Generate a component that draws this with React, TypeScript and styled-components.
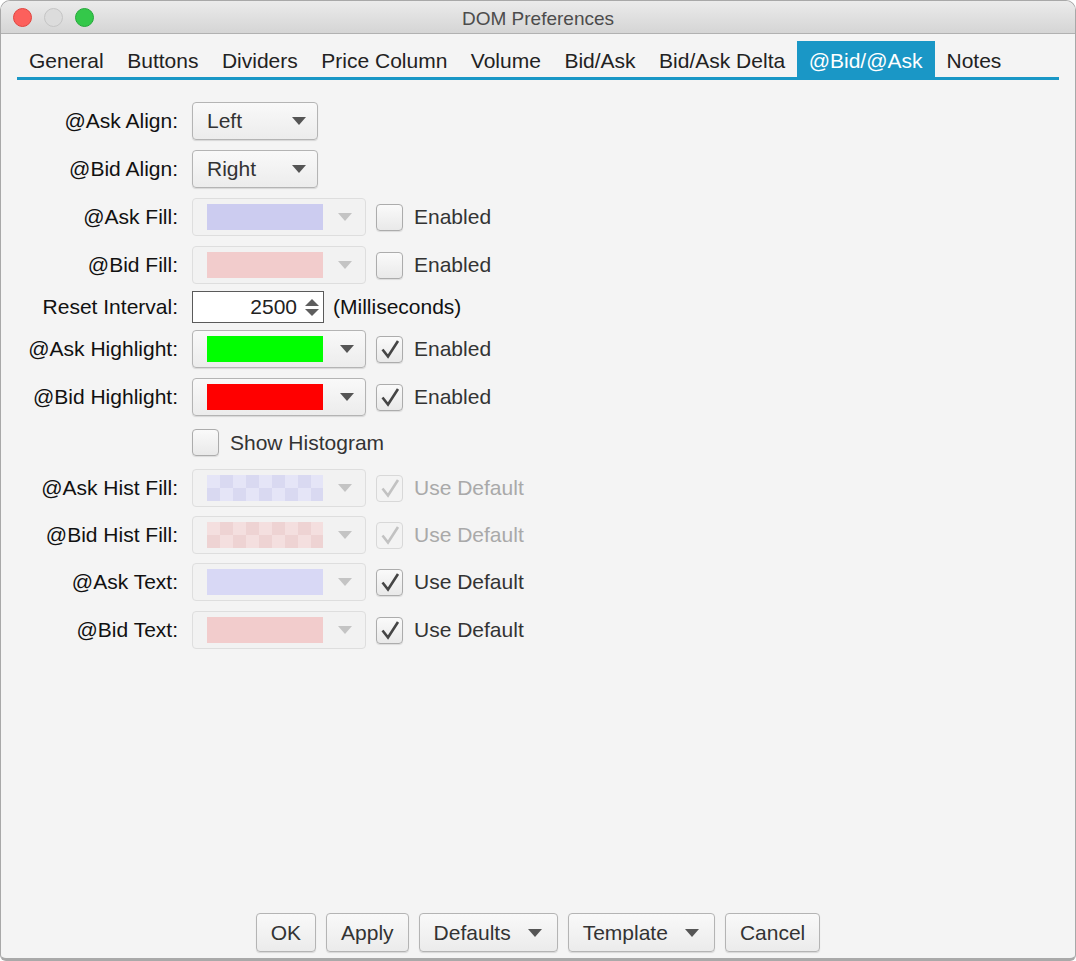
import React from "react";
import styled, { createGlobalStyle, css } from "styled-components";

const GlobalStyle = createGlobalStyle`
  html, body {
    margin: 0;
    padding: 0;
    background: #ffffff;
  }
  body {
    font-family: "Liberation Sans", Arial, sans-serif;
  }
  * {
    box-sizing: border-box;
  }
`;

const Window = styled.div`
  width: 1076px;
  height: 961px;
  display: flex;
  flex-direction: column;
  border: 1px solid #a8a8a8;
  border-bottom: 3px solid #a9a9a9;
  border-radius: 10px 10px 6px 6px;
  overflow: hidden;
  background: #f4f4f4;
`;

const TitleBar = styled.div`
  height: 33px;
  flex: none;
  display: flex;
  align-items: center;
  padding-left: 12px;
  background: linear-gradient(#ebebeb, #d5d5d5);
  border-bottom: 1px solid #b1b1b1;
  position: relative;
`;

const Lights = styled.div`
  display: flex;
  gap: 12px;
`;

const Light = styled.span<{ $fill: string; $edge: string }>`
  width: 19px;
  height: 19px;
  border-radius: 50%;
  background: ${(p) => p.$fill};
  border: 1px solid ${(p) => p.$edge};
`;

const Title = styled.div`
  position: absolute;
  left: 0;
  right: 0;
  top: 0;
  bottom: 0;
  display: flex;
  align-items: center;
  justify-content: center;
  padding-top: 3px;
  font-size: 19px;
  color: #4c4c4c;
  pointer-events: none;
`;

const Body = styled.div`
  flex: 1;
  display: flex;
  flex-direction: column;
  padding: 7px 16px 0 16px;
`;

const TabBar = styled.div`
  display: flex;
  border-bottom: 3px solid #1a97c6;
`;

const Tab = styled.div<{ $active?: boolean }>`
  height: 36px;
  display: flex;
  align-items: center;
  padding: 3px 11.5px 0 12px;
  font-size: 21px;
  color: #222;
  ${(p) =>
    p.$active &&
    css`
      background: #1a97c6;
      color: #ffffff;
      padding: 3px 12px 0 12px;
    `}
`;

const Form = styled.div`
  display: flex;
  flex-direction: column;
  padding-top: 17px;
  flex: 1;
`;

const Row = styled.div<{ $h?: number }>`
  height: ${(p) => p.$h ?? 48}px;
  display: flex;
  align-items: center;
`;

const Label = styled.div`
  width: 161px;
  flex: none;
  text-align: right;
  font-size: 21px;
  color: #111;
  margin-right: 14px;
`;

const Controls = styled.div`
  display: flex;
  align-items: center;
`;

const Combo = styled.div<{ $w: number; $disabled?: boolean }>`
  width: ${(p) => p.$w}px;
  height: 38px;
  display: flex;
  align-items: center;
  justify-content: space-between;
  padding: 0 10px 0 14px;
  border-radius: 4px;
  font-size: 21px;
  color: #333;
  border: 1px solid ${(p) => (p.$disabled ? "#dedede" : "#b4b4b4")};
  background: ${(p) =>
    p.$disabled ? "#f2f2f2" : "linear-gradient(#f9f9f9, #ececec)"};
  box-shadow: ${(p) => (p.$disabled ? "none" : "0 1px 1px rgba(0,0,0,0.12)")};
`;

const Arrow = styled.span<{ $disabled?: boolean }>`
  width: 0;
  height: 0;
  border-left: 7px solid transparent;
  border-right: 7px solid transparent;
  border-top: 8px solid ${(p) => (p.$disabled ? "#c4c4c4" : "#555")};
  margin-right: ${(p) => (p.$disabled ? 3 : 1)}px;
`;

const Swatch = styled.span<{ $color: string; $alt?: string }>`
  width: 116px;
  height: 26px;
  background-color: ${(p) => p.$color};
  ${(p) =>
    p.$alt &&
    css`
      background-image: conic-gradient(
        ${p.$alt} 0 25%,
        transparent 0 50%,
        ${p.$alt} 0 75%,
        transparent 0
      );
      background-size: 26px 26px;
    `}
`;

const Box = styled.span<{ $disabled?: boolean }>`
  width: 27px;
  height: 27px;
  flex: none;
  display: flex;
  align-items: center;
  justify-content: center;
  border-radius: 4px;
  border: 1px solid ${(p) => (p.$disabled ? "#d8d8d8" : "#acacac")};
  background: ${(p) =>
    p.$disabled ? "#f3f3f3" : "linear-gradient(#fafafa, #e9e9e9)"};
  box-shadow: ${(p) => (p.$disabled ? "none" : "0 1px 1px rgba(0,0,0,0.1)")};
`;

const CheckText = styled.span<{ $disabled?: boolean }>`
  font-size: 21px;
  color: ${(p) => (p.$disabled ? "#a9a9a9" : "#333")};
  margin-left: 11px;
`;

const CheckWrap = styled.div<{ $offset?: number }>`
  display: flex;
  align-items: center;
  margin-left: ${(p) => p.$offset ?? 10}px;
`;

const Spinner = styled.div`
  width: 132px;
  height: 32px;
  display: flex;
  align-items: center;
  justify-content: flex-end;
  gap: 8px;
  padding-right: 4px;
  background: #ffffff;
  border: 1px solid #5a5a5a;
  font-size: 21px;
  color: #222;
`;

const Steps = styled.span`
  display: flex;
  flex-direction: column;
  gap: 3px;
`;

const Step = styled.span<{ $up?: boolean }>`
  width: 0;
  height: 0;
  border-left: 7px solid transparent;
  border-right: 7px solid transparent;
  ${(p) =>
    p.$up
      ? "border-bottom: 7px solid #5e5e5e;"
      : "border-top: 7px solid #5e5e5e;"}
`;

const Unit = styled.span`
  font-size: 21px;
  color: #111;
  margin-left: 9px;
`;

const Footer = styled.div`
  display: flex;
  justify-content: center;
  gap: 10px;
  padding-bottom: 6px;
`;

const Button = styled.div`
  height: 39px;
  display: flex;
  align-items: center;
  gap: 17px;
  padding: 0 14px;
  border-radius: 4px;
  border: 1px solid #b4b4b4;
  background: linear-gradient(#f9f9f9, #ebebeb);
  box-shadow: 0 1px 1px rgba(0, 0, 0, 0.12);
  font-size: 21px;
  color: #333;
`;

const Tick = ({ disabled }: { disabled?: boolean }) => (
  <svg width="22" height="22" viewBox="0 0 22 22">
    <path
      d="M3.5 11.5 L9 18.5 L19 3"
      fill="none"
      stroke={disabled ? "#c2c2c2" : "#454545"}
      strokeWidth="2.6"
      strokeLinejoin="miter"
    />
  </svg>
);

const CheckBox = ({
  text,
  checked,
  disabled,
  offset,
}: {
  text: string;
  checked?: boolean;
  disabled?: boolean;
  offset?: number;
}) => (
  <CheckWrap $offset={offset}>
    <Box $disabled={disabled}>{checked && <Tick disabled={disabled} />}</Box>
    <CheckText $disabled={disabled}>{text}</CheckText>
  </CheckWrap>
);

type ColorRowProps = {
  label: string;
  color: string;
  alt?: string;
  disabled?: boolean;
  check: string;
  checked?: boolean;
  checkDisabled?: boolean;
  h?: number;
};

const ColorRow = ({
  label,
  color,
  alt,
  disabled,
  check,
  checked,
  checkDisabled,
  h,
}: ColorRowProps) => (
  <Row $h={h}>
    <Label>{label}</Label>
    <Controls>
      <Combo $w={174} $disabled={disabled}>
        <Swatch $color={color} $alt={alt} />
        <Arrow $disabled={disabled} />
      </Combo>
      <CheckBox text={check} checked={checked} disabled={checkDisabled} />
    </Controls>
  </Row>
);

const tabs = [
  "General",
  "Buttons",
  "Dividers",
  "Price Column",
  "Volume",
  "Bid/Ask",
  "Bid/Ask Delta",
  "@Bid/@Ask",
  "Notes",
];

export default function App() {
  return (
    <>
      <GlobalStyle />
      <Window>
        <TitleBar>
          <Lights>
            <Light $fill="#fc605c" $edge="#e0443e" />
            <Light $fill="#dcdcdc" $edge="#c4c4c4" />
            <Light $fill="#34c84a" $edge="#25a83a" />
          </Lights>
          <Title>DOM Preferences</Title>
        </TitleBar>
        <Body>
          <TabBar>
            {tabs.map((t) => (
              <Tab key={t} $active={t === "@Bid/@Ask"}>
                {t}
              </Tab>
            ))}
          </TabBar>
          <Form>
            <Row>
              <Label>@Ask Align:</Label>
              <Combo $w={126}>
                Left
                <Arrow />
              </Combo>
            </Row>
            <Row>
              <Label>@Bid Align:</Label>
              <Combo $w={126}>
                Right
                <Arrow />
              </Combo>
            </Row>
            <ColorRow label="@Ask Fill:" color="#ccccf0" disabled check="Enabled" />
            <ColorRow label="@Bid Fill:" color="#f2cccc" disabled check="Enabled" />
            <Row $h={36}>
              <Label>Reset Interval:</Label>
              <Controls>
                <Spinner>
                  2500
                  <Steps>
                    <Step $up />
                    <Step />
                  </Steps>
                </Spinner>
                <Unit>(Milliseconds)</Unit>
              </Controls>
            </Row>
            <ColorRow label="@Ask Highlight:" color="#00ff00" check="Enabled" checked />
            <ColorRow label="@Bid Highlight:" color="#ff0000" check="Enabled" checked />
            <Row $h={43}>
              <Label />
              <CheckBox text="Show Histogram" offset={0} />
            </Row>
            <ColorRow
              label="@Ask Hist Fill:"
              color="#e5e5f7"
              alt="#d9d9f1"
              disabled
              check="Use Default"
              checked
              checkDisabled
            />
            <ColorRow
              label="@Bid Hist Fill:"
              color="#f4dfdf"
              alt="#eed3d3"
              disabled
              check="Use Default"
              checked
              checkDisabled
              h={46}
            />
            <ColorRow label="@Ask Text:" color="#d8d8f5" disabled check="Use Default" checked />
            <ColorRow label="@Bid Text:" color="#f2cccc" disabled check="Use Default" checked />
          </Form>
          <Footer>
            <Button>OK</Button>
            <Button>Apply</Button>
            <Button>
              Defaults
              <Arrow />
            </Button>
            <Button>
              Template
              <Arrow />
            </Button>
            <Button>Cancel</Button>
          </Footer>
        </Body>
      </Window>
    </>
  );
}
